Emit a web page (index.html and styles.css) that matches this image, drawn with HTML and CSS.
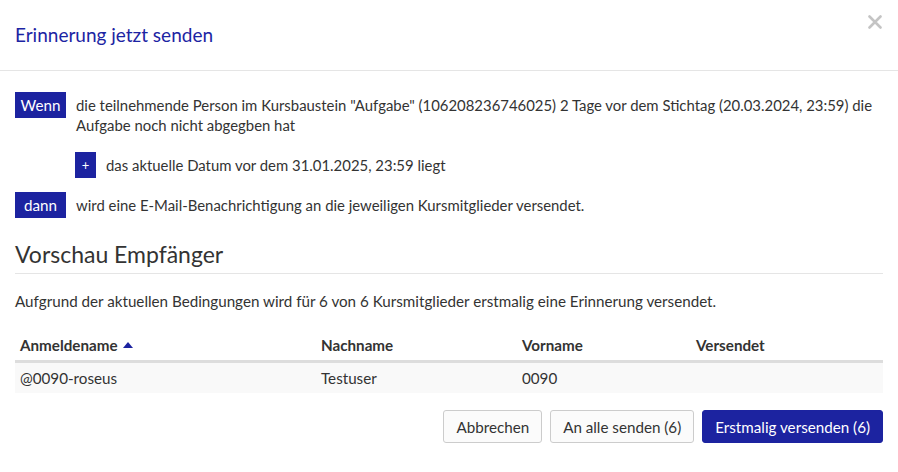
FILE: index.html
```html
<!DOCTYPE html>
<html lang="de">
<head>
<meta charset="utf-8">
<title>Erinnerung jetzt senden</title>
<link rel="stylesheet" href="styles.css">
</head>
<body>
<div class="modal">
  <div class="modal-header">
    <h4 class="modal-title">Erinnerung jetzt senden</h4>
    <button class="close" type="button" aria-label="Schliessen">
      <svg width="14" height="14" viewBox="0 0 14 14"><path d="M1.5 1.5L12.5 12.5M12.5 1.5L1.5 12.5" stroke="#c4c4c4" stroke-width="2.6" stroke-linecap="round"/></svg>
    </button>
  </div>
  <div class="modal-body">
    <div class="rule">
      <span class="badge">Wenn</span>
      <div class="rule-text">die teilnehmende Person im Kursbaustein "Aufgabe" (106208236746025) 2 Tage vor dem Stichtag (20.03.2024, 23:59) die Aufgabe noch nicht abgegben hat</div>
    </div>
    <div class="rule rule-sub">
      <span class="badge badge-plus">+</span>
      <div class="rule-text">das aktuelle Datum vor dem 31.01.2025, 23:59 liegt</div>
    </div>
    <div class="rule">
      <span class="badge">dann</span>
      <div class="rule-text">wird eine E-Mail-Benachrichtigung an die jeweiligen Kursmitglieder versendet.</div>
    </div>
    <h3 class="section-title">Vorschau Empfänger</h3>
    <p class="info">Aufgrund der aktuellen Bedingungen wird für 6 von 6 Kursmitglieder erstmalig eine Erinnerung versendet.</p>
    <table class="table">
      <thead>
        <tr>
          <th class="col-1">Anmeldename <span class="sort"></span></th>
          <th class="col-2">Nachname</th>
          <th class="col-3">Vorname</th>
          <th class="col-4">Versendet</th>
        </tr>
      </thead>
      <tbody>
        <tr>
          <td>@0090-roseus</td>
          <td>Testuser</td>
          <td>0090</td>
          <td></td>
        </tr>
      </tbody>
    </table>
    <div class="buttons">
      <button class="btn" type="button">Abbrechen</button>
      <button class="btn" type="button">An alle senden (6)</button>
      <button class="btn btn-primary" type="button">Erstmalig versenden (6)</button>
    </div>
  </div>
</div>
</body>
</html>
```
FILE: styles.css
```css
* { box-sizing: border-box; }
html, body { margin: 0; padding: 0; background: #fff; }
body {
  font-family: Lato, "Liberation Sans", sans-serif;
  font-size: 15.2px;
  color: #333;
  line-height: 20px;
}
.modal { width: 898px; }
.modal-header {
  display: flex;
  align-items: flex-start;
  justify-content: space-between;
  padding: 22px 15px 0 15px;
  height: 71px;
  border-bottom: 1px solid #e5e5e5;
}
.modal-title {
  margin: 0;
  font-size: 19px;
  font-weight: 400;
  color: #1c24a3;
  line-height: 26px;
}
.close {
  border: 0;
  background: none;
  padding: 0;
  margin: -7px 1px 0 0;
  width: 14px;
  height: 14px;
  cursor: pointer;
}
.modal-body { padding: 21px 15px 0 15px; }
.rule {
  display: flex;
  align-items: flex-start;
  gap: 10px;
  margin-bottom: 14px;
}
.rule-sub { padding-left: 60px; }
.badge {
  flex: none;
  display: inline-block;
  background: #1c23a0;
  color: #fff;
  height: 26px;
  line-height: 26px;
  width: 51px;
  text-align: center;
}
.badge-plus { width: 21px; font-size: 13px; }
.rule-text { padding: 3px 0 3px 0; font-size: 14.9px; }
.section-title {
  margin: 21px 0 0 0;
  font-size: 23px;
  font-weight: 400;
  color: #333;
  line-height: 30px;
  padding-bottom: 4px;
  border-bottom: 1px solid #e5e5e5;
}
.info { margin: 17px 0 18px 0; }
.table { width: 868px; border-collapse: collapse; }
.table th {
  text-align: left;
  font-weight: 700;
  padding: 6px 5px 5px 5px;
  border-bottom: 3px solid #ddd;
}
.table td { padding: 5px 5px; background: #f9f9f9; }
.col-1 { width: 301px; }
.col-2 { width: 201px; }
.col-3 { width: 174px; }
.sort {
  display: inline-block;
  width: 0; height: 0;
  border-left: 5px solid transparent;
  border-right: 5px solid transparent;
  border-bottom: 6px solid #1c23a0;
  vertical-align: 3px;
  margin-left: 2px;
}
.buttons {
  display: flex;
  justify-content: flex-end;
  gap: 8px;
  margin-top: 17px;
}
.btn {
  font-family: inherit;
  font-size: 15.2px;
  color: #333;
  background: #fbfbfb;
  border: 1px solid #ccc;
  border-radius: 3px;
  height: 33px;
  padding: 0 12px;
  line-height: 20px;
}
.btn-primary { background: #1c23a0; border-color: #1c23a0; color: #fff; }
```
